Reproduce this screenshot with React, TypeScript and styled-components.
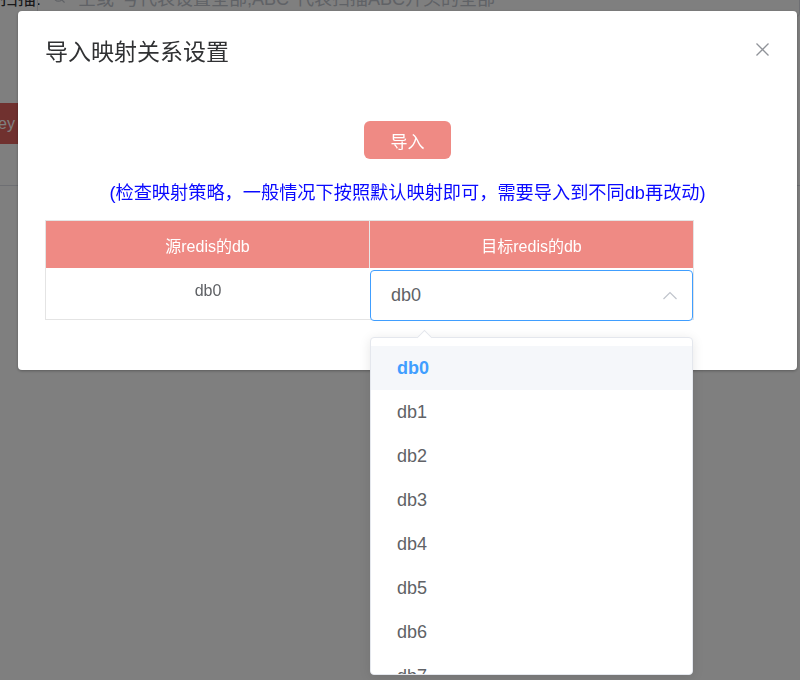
import styled, {createGlobalStyle} from 'styled-components';
import {Search} from 'lucide-react';

const GlobalStyle = createGlobalStyle`
  html, body {
    margin: 0;
    padding: 0;
    background: #fff;
    font-family: "Helvetica Neue", Helvetica, "Liberation Sans", "Noto Sans CJK SC", sans-serif;
    overflow: hidden;
  }
  * {
    box-sizing: border-box;
  }
`;

// page behind the dialog
const Page = styled.div`
  height: 680px;
`;

const ScanBar = styled.div`
  display: flex;
  align-items: center;
  height: 40px;
  margin-top: -23px;
`;

const ScanLabel = styled.div`
  width: 37px;
  padding-right: 12px;
  text-align: right;
  white-space: nowrap;
  font-size: 18px;
  color: #303133;
`;

const SearchBox = styled.div`
  flex: 1;
  height: 40px;
  display: flex;
  align-items: center;
  gap: 12px;
  padding-left: 14px;
  border: 1px solid #dcdfe6;
  border-radius: 4px;
  color: #c0c4cc;
  font-size: 18px;
  white-space: nowrap;
`;

const KeyButton = styled.button`
  display: block;
  margin: 86px 0 0 -22px;
  height: 41px;
  padding: 0 12px;
  border: none;
  border-radius: 4px;
  background: #e0625e;
  color: #fff;
  font-size: 16px;
  font-family: inherit;
`;

const Divider = styled.div`
  margin-top: 41px;
  border-top: 1px solid #dcdfe6;
`;

// dialog
const Overlay = styled.div`
  position: fixed;
  inset: 0;
  background: rgba(0, 0, 0, 0.5);
  display: flex;
  align-items: flex-start;
  padding: 11px 3px 0 18px;
`;

const Dialog = styled.div`
  width: 779px;
  background: #fff;
  border-radius: 4px;
  box-shadow: 0 1px 3px rgba(0, 0, 0, 0.3);
`;

const DialogHeader = styled.div`
  display: flex;
  justify-content: space-between;
  align-items: flex-start;
  padding: 26px 28px 0 27px;
`;

const Title = styled.span`
  font-size: 23px;
  line-height: 30px;
  color: #303133;
`;

const CloseButton = styled.button`
  margin-top: 6px;
  width: 13px;
  height: 13px;
  padding: 0;
  border: none;
  background: none;
  display: flex;
  cursor: pointer;
`;

const DialogBody = styled.div`
  display: flex;
  flex-direction: column;
  padding: 54px 27px 50px;
`;

const ImportButton = styled.button`
  align-self: center;
  width: 87px;
  height: 38px;
  border: none;
  border-radius: 6px;
  background: #ef8a84;
  color: #fff;
  font-size: 17px;
  font-family: inherit;
  cursor: pointer;
`;

const Note = styled.div`
  align-self: center;
  margin-top: 22px;
  font-size: 18.2px;
  line-height: 24px;
  color: #0a0aff;
  white-space: nowrap;
`;

const Table = styled.div`
  margin-top: 15px;
  width: 649px;
  display: grid;
  grid-template-columns: 324px 1fr;
  border: 1px solid #e4e4e4;
`;

const HeadCell = styled.div<{$first?: boolean}>`
  height: 47px;
  display: flex;
  align-items: center;
  justify-content: center;
  background: #ef8a84;
  color: #fff;
  font-size: 16px;
  border-right: ${(p) => (p.$first ? '1px solid #e8e8e8' : 'none')};
`;

const BodyCell = styled.div`
  height: 51px;
  padding-top: 12px;
  text-align: center;
  font-size: 16px;
  line-height: 22px;
  color: #606266;
`;

const SelectCell = styled.div`
  position: relative;
  height: 51px;
  padding-top: 2px;
`;

const SelectBox = styled.div`
  height: 51px;
  display: flex;
  align-items: center;
  justify-content: space-between;
  padding: 0 15px 0 20px;
  border: 1px solid #409eff;
  border-radius: 4px;
  font-size: 18px;
  color: #606266;
  background: #fff;
`;

const Dropdown = styled.div`
  position: absolute;
  top: 69px;
  left: 0;
  width: 100%;
  height: 338px;
  background: #fff;
  border: 1px solid #e4e7ed;
  border-radius: 4px;
  box-shadow: 0 2px 12px rgba(0, 0, 0, 0.1);
  z-index: 2;

  &::before {
    content: '';
    position: absolute;
    top: -6px;
    left: 48px;
    width: 10px;
    height: 10px;
    background: #fff;
    border-top: 1px solid #e4e7ed;
    border-left: 1px solid #e4e7ed;
    transform: rotate(45deg);
  }
`;

const OptionList = styled.ul`
  list-style: none;
  margin: 0;
  padding: 8px 0 0;
  height: 100%;
  overflow: hidden;
  border-radius: 4px;
`;

const Option = styled.li<{$selected?: boolean}>`
  height: 44px;
  line-height: 44px;
  padding-left: 26px;
  font-size: 18px;
  color: ${(p) => (p.$selected ? '#409eff' : '#606266')};
  font-weight: ${(p) => (p.$selected ? 700 : 400)};
  background: ${(p) => (p.$selected ? '#f5f7fa' : '#fff')};
`;

const options = ['db0', 'db1', 'db2', 'db3', 'db4', 'db5', 'db6', 'db7', 'db8'];

const CloseIcon = () => (
  <svg width="13" height="13" viewBox="0 0 13 13">
    <path d="M0.5 0.5 L12.5 12.5 M12.5 0.5 L0.5 12.5" stroke="#909399" strokeWidth="1.3" fill="none" />
  </svg>
);

const ChevronUp = () => (
  <svg width="14" height="9" viewBox="0 0 14 9">
    <polyline points="0.5,8 7,1.5 13.5,8" stroke="#c0c4cc" strokeWidth="1.2" fill="none" />
  </svg>
);

export default function App() {
  return (
    <>
      <GlobalStyle />
      <Page>
        <ScanBar>
          <ScanLabel>扫描:</ScanLabel>
          <SearchBox>
            <Search size={14} strokeWidth={2} />
            空或*号代表设置全部,ABC*代表扫描ABC开头的全部
          </SearchBox>
        </ScanBar>
        <KeyButton>key</KeyButton>
        <Divider />
      </Page>

      <Overlay>
        <Dialog>
          <DialogHeader>
            <Title>导入映射关系设置</Title>
            <CloseButton aria-label="close">
              <CloseIcon />
            </CloseButton>
          </DialogHeader>
          <DialogBody>
            <ImportButton>导入</ImportButton>
            <Note>(检查映射策略，一般情况下按照默认映射即可，需要导入到不同db再改动)</Note>
            <Table>
              <HeadCell $first>源redis的db</HeadCell>
              <HeadCell>目标redis的db</HeadCell>
              <BodyCell>db0</BodyCell>
              <SelectCell>
                <SelectBox>
                  db0
                  <ChevronUp />
                </SelectBox>
                <Dropdown>
                  <OptionList>
                    {options.map((o) => (
                      <Option key={o} $selected={o === 'db0'}>
                        {o}
                      </Option>
                    ))}
                  </OptionList>
                </Dropdown>
              </SelectCell>
            </Table>
          </DialogBody>
        </Dialog>
      </Overlay>
    </>
  );
}
